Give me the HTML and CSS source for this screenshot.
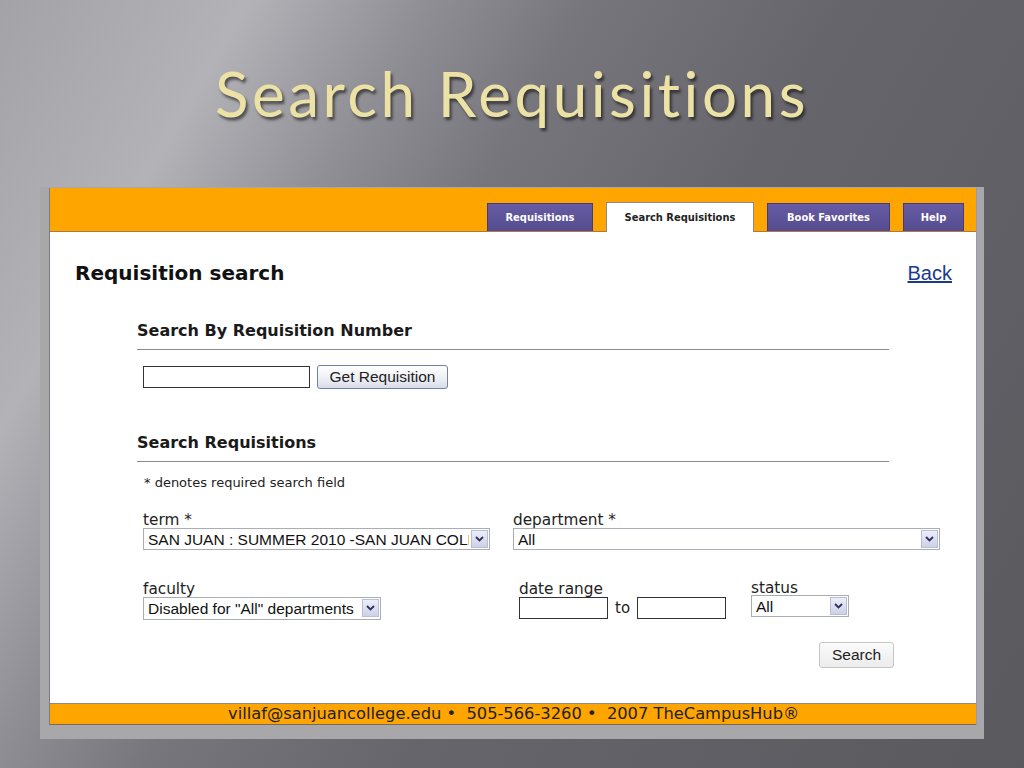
FILE: index.html
```html
<!DOCTYPE html>
<html lang="en">
<head>
    <meta charset="UTF-8">
    <title>Search Requisitions</title>
    <link rel="stylesheet" href="styles.css">
</head>
<body>
<h1 class="slideTitle">Search Requisitions</h1>
<div class="shotFrame">
    <div class="shotInner">
        <div class="topBar">
            <a class="tab tabReq" href="#">Requisitions</a>
            <a class="tab tabSearch active" href="#">Search Requisitions</a>
            <a class="tab tabFav" href="#">Book Favorites</a>
            <a class="tab tabHelp" href="#">Help</a>
        </div>
        <div class="content">
            <div class="pageHead">
                <h2>Requisition search</h2>
                <a class="backLink" href="#">Back</a>
            </div>

            <div class="section">
                <h3>Search By Requisition Number</h3>
                <div class="reqRow">
                    <input type="text" class="tbx tbxReq">
                    <button class="btnGet">Get Requisition</button>
                </div>
            </div>

            <div class="section section2">
                <h3>Search Requisitions</h3>
                <div class="note">* denotes required search field</div>

                <div class="fieldRow">
                    <div class="field fTerm">
                        <label>term *</label>
                        <span class="sel selTerm">
                            <select><option>SAN JUAN : SUMMER 2010 -SAN JUAN COLLEGE</option></select>
                            <span class="arrow"><svg width="9" height="6" viewBox="0 0 9 6"><path d="M1 1 L4.5 4.5 L8 1" fill="none" stroke="#2b3160" stroke-width="1.8"/></svg></span>
                        </span>
                    </div>
                    <div class="field fDept">
                        <label>department *</label>
                        <span class="sel selDept">
                            <select><option>All</option></select>
                            <span class="arrow"><svg width="9" height="6" viewBox="0 0 9 6"><path d="M1 1 L4.5 4.5 L8 1" fill="none" stroke="#2b3160" stroke-width="1.8"/></svg></span>
                        </span>
                    </div>
                </div>

                <div class="fieldRow row2">
                    <div class="field fFaculty">
                        <label>faculty</label>
                        <span class="sel selFaculty">
                            <select disabled><option>Disabled for "All" departments</option></select>
                            <span class="arrow"><svg width="9" height="6" viewBox="0 0 9 6"><path d="M1 1 L4.5 4.5 L8 1" fill="none" stroke="#2b3160" stroke-width="1.8"/></svg></span>
                        </span>
                    </div>
                    <div class="field fDate">
                        <label>date range</label>
                        <div class="dateRow">
                            <input type="text" class="tbx tbxDate">
                            <span class="to">to</span>
                            <input type="text" class="tbx tbxDate">
                        </div>
                    </div>
                    <div class="field fStatus">
                        <label>status</label>
                        <span class="sel selStatus">
                            <select><option>All</option></select>
                            <span class="arrow"><svg width="9" height="6" viewBox="0 0 9 6"><path d="M1 1 L4.5 4.5 L8 1" fill="none" stroke="#2b3160" stroke-width="1.8"/></svg></span>
                        </span>
                    </div>
                </div>

                <div class="searchRow">
                    <button class="btnSearch">Search</button>
                </div>
            </div>
        </div>
        <div class="footer">
            villaf@sanjuancollege.edu &bull;&nbsp; 505-566-3260 &bull;&nbsp; 2007 TheCampusHub&reg;
        </div>
    </div>
</div>
</body>
</html>
```

FILE: styles.css
```css
html,body{
    margin: 0;
    padding: 0;
}
body{
    width: 1024px;
    height: 768px;
    overflow: hidden;
    background: linear-gradient(120deg, #a3a2a7 0%, #b3b2b7 17%, #908f95 29%, #77767c 40%, #66656b 58%, #5a595e 100%);
    font-family: "DejaVu Sans", Verdana, sans-serif;
}
.slideTitle{
    margin: 0;
    height: 187px;
    box-sizing: border-box;
    padding-top: 62px;
    text-align: center;
    font-family: Lato, "Open Sans", sans-serif;
    font-weight: normal;
    font-size: 62px;
    line-height: 62px;
    letter-spacing: 3.5px;
    color: #ece2a6;
    text-shadow: 2px 3px 3px rgba(0,0,0,0.55);
}
.shotFrame{
    margin-left: 40px;
    width: 944px;
    box-sizing: border-box;
    padding: 1px 7px 14px 9px;
    background-color: #a8a8aa;
}
.shotInner{
    border-left: 1px solid #7a7a86;
    border-right: 1px solid #9a98b8;
    background-color: #fff;
}
.topBar{
    height: 43px;
    background-color: #ffa500;
    border-bottom: 1px solid #a87a44;
    display: flex;
    justify-content: flex-end;
    align-items: flex-end;
    gap: 13px;
    padding-right: 12px;
}
.tab{
    display: block;
    height: 28px;
    box-sizing: border-box;
    line-height: 27px;
    text-align: center;
    text-decoration: none;
    font-family: "DejaVu Sans Condensed", "DejaVu Sans", sans-serif;
    font-weight: bold;
    font-size: 11px;
    color: #fff;
    background: linear-gradient(#675ca4, #554b8e);
    border: 1px solid #463d78;
    border-bottom: 0;
}
.tabReq{ width: 106px; }
.tabSearch{ width: 148px; }
.tabFav{ width: 123px; }
.tabHelp{ width: 61px; }
.tab.active{
    height: 30px;
    margin-bottom: -1px;
    line-height: 29px;
    background: #fff;
    color: #222;
    border: 1px solid #8a8a8a;
    border-bottom: 0;
}
.content{
    height: 471px;
    padding: 0 23px 0 25px;
}
.pageHead{
    display: flex;
    justify-content: space-between;
    align-items: baseline;
    padding-top: 29px;
}
h2{
    margin: 0;
    font-size: 20px;
    font-weight: bold;
    color: #111;
}
.backLink{
    font-family: "Liberation Sans", Arial, sans-serif;
    font-size: 20px;
    color: #1c3a8c;
    margin-right: 1px;
}
.section{
    margin-left: 62px;
    width: 752px;
}
h3{
    margin: 0;
    font-size: 16px;
    font-weight: bold;
    color: #1a1a1a;
    padding-bottom: 9px;
    border-bottom: 1px solid #8c8c8c;
}
.pageHead + .section{
    margin-top: 36px;
}
.reqRow{
    display: flex;
    align-items: center;
    gap: 7px;
    padding: 15px 0 0 6px;
}
.tbx{
    box-sizing: border-box;
    border: 1px solid #333;
    height: 22px;
    margin: 0;
    padding: 0 3px;
    background: #fff;
}
.tbxReq{
    width: 167px;
}
.btnGet,.btnSearch{
    font-family: "Liberation Sans", Arial, sans-serif;
    font-size: 15.5px;
    color: #222;
    border-radius: 3px;
    height: 24px;
    padding: 0;
    margin: 0;
}
.btnGet{
    width: 131px;
    border: 1px solid #6d84a8;
    background: linear-gradient(#ffffff, #eceef4 60%, #d8dce8);
}
.section2{
    margin-top: 44px;
}
.note{
    font-size: 13px;
    color: #222;
    padding: 13px 0 0 7px;
}
.fieldRow{
    display: flex;
    padding-left: 6px;
    margin-top: 22px;
}
.field{
    flex-shrink: 0;
}
.field label{
    display: block;
    font-size: 15.3px;
    color: #222;
    line-height: 16px;
}
.fTerm{
    width: 370px;
}
.sel{
    display: block;
    position: relative;
    height: 22px;
}
.sel select{
    appearance: none;
    -webkit-appearance: none;
    box-sizing: border-box;
    width: 100%;
    height: 100%;
    margin: 0;
    padding: 0 20px 0 4px;
    border: 1px solid #a9adb4;
    background: #fff;
    font-family: "Liberation Sans", Arial, sans-serif;
    font-size: 15.5px;
    color: #111;
    opacity: 1;
}
.sel .arrow{
    position: absolute;
    top: 2px;
    right: 2px;
    width: 17px;
    height: 18px;
    box-sizing: border-box;
    border: 1px solid #b9bed6;
    background: linear-gradient(#eceef8, #cdd1e6);
    display: flex;
    align-items: center;
    justify-content: center;
}
.selTerm{
    width: 347px;
}
.selDept{
    width: 427px;
}
.row2{
    margin-top: 31px;
}
.fFaculty{
    width: 376px;
}
.selFaculty{
    width: 238px;
    height: 23px;
}
.fDate{
    width: 232px;
}
.dateRow{
    display: flex;
    align-items: center;
    gap: 7px;
}
.tbxDate{
    width: 89px;
}
.to{
    font-size: 15px;
    color: #222;
}
.fStatus label{
    line-height: 14px;
}
.selStatus{
    width: 98px;
}
.searchRow{
    display: flex;
    justify-content: flex-end;
    margin-top: 22px;
}
.btnSearch{
    width: 75px;
    height: 26px;
    border: 1px solid #c6c6c6;
    background: linear-gradient(#fbfbfb, #ececec);
    margin-right: -5px;
}
.footer{
    height: 20px;
    line-height: 20px;
    background-color: #ffa500;
    border-top: 1px solid #8a8a8a;
    border-bottom: 1px solid #7a6a55;
    padding-left: 178px;
    font-size: 16.3px;
    color: #222;
    white-space: nowrap;
}
```
